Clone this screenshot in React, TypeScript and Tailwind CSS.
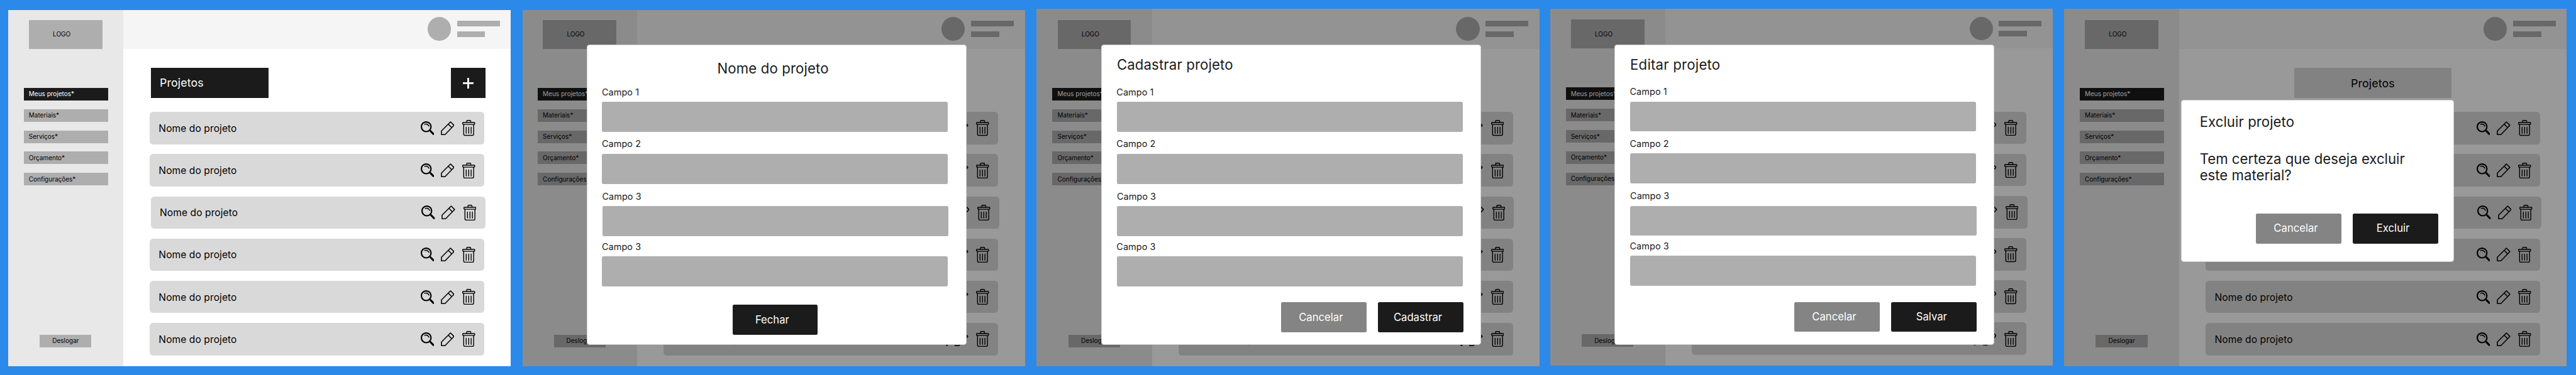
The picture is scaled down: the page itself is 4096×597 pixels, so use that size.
import type { ReactNode } from "react";

const NAV_ITEMS = ["Meus projetos*", "Materiais*", "Serviços*", "Orçamento*", "Configurações*"];
const FIELDS = [
  { label: "Campo 1", className: "" },
  { label: "Campo 2", className: "mt-19" },
  { label: "Campo 3", className: "mt-20 ml-1 -mr-1" },
  { label: "Campo 3", className: "mt-14" },
];

function SearchIcon() {
  return (
    <svg className="h-40 w-39 shrink-0" viewBox="0 0 117 119" fill="none" stroke="black" strokeLinecap="round">
      <circle cx="47" cy="47" r="41.5" strokeWidth="11.5" />
      <path d="M34 26C48 21 63 26 71 42" strokeWidth="8" />
      <path d="M76 76L90 90" strokeWidth="11" />
      <path d="M86 86L108 109" strokeWidth="17" />
    </svg>
  );
}

function PencilIcon() {
  return (
    <svg className="h-40 w-39 shrink-0" viewBox="0 0 117 119" fill="none" stroke="black" strokeWidth="8.5" strokeLinejoin="round">
      <path d="M83 5L113 35L36 114H5V83Z" />
      <path d="M63 24L94 55" />
    </svg>
  );
}

function TrashIcon() {
  return (
    <svg className="h-45.5 w-37 shrink-0" viewBox="0 0 111 136" fill="none" stroke="black" strokeWidth="7.5" strokeLinecap="round" strokeLinejoin="round">
      <path d="M38 20V9Q38 4 43 4H68Q73 4 73 9V20" />
      <rect x="4" y="21" width="103" height="17" rx="4" />
      <path d="M12.500 38V121Q12.500 132 23.500 132H87Q98 132 98 121V38" />
      <path d="M34 62V115M55.500 62V115M76.500 62V115" />
    </svg>
  );
}

function Sidebar({ className }: { className: string }) {
  return (
    <aside className={`flex shrink-0 flex-col bg-[#e8e8e8] text-[10px] ${className}`}>
      <div className="ml-59 flex h-83 w-210 items-center bg-[#aeaeae] pl-68.5">LOGO</div>
      <nav className="mt-112 ml-44 flex w-241 flex-col gap-25">
        {NAV_ITEMS.map((item, i) => (
          <a
            key={item}
            className={`flex h-36 items-center pl-14.5 ${i === 0 ? "bg-[#1b1b1b] text-white" : "bg-[#aeaeae]"}`}
          >
            {item}
          </a>
        ))}
      </nav>
      <button className="mt-428 ml-90 flex h-36 w-148 items-center bg-[#aeaeae] pl-36">Deslogar</button>
    </aside>
  );
}

function Header({ className }: { className: string }) {
  return (
    <header className={`flex shrink-0 items-end justify-end bg-[#f5f5f5] pr-32 pb-23 ${className}`}>
      <div className="size-67.5 rounded-full bg-[#aeaeae]" />
      <div className="mb-11 ml-17 flex w-122.5 flex-col gap-14">
        <div className="h-16 bg-[#aeaeae]" />
        <div className="h-16 w-81 bg-[#aeaeae]" />
      </div>
    </header>
  );
}

function ProjectRow({ shifted, covered }: { shifted: boolean; covered: boolean }) {
  return (
    <li className={`flex h-93 w-958 items-center rounded-[5.5px] bg-[#d9d9d9] pr-26 pl-25.5 ${shifted ? "ml-79" : "ml-76"}`}>
      {!covered && <span className="pt-2 text-[15.55px] tracking-[0.09px]">Nome do projeto</span>}
      <div className="ml-auto flex items-center">
        <SearchIcon />
        <div className="w-19" />
        <PencilIcon />
        <div className="w-23" />
        <TrashIcon />
      </div>
    </li>
  );
}

type ScreenProps = {
  className: string;
  sidebar: string;
  header: string;
  /** Number of leading rows whose name lies fully under the dialog. */
  coveredRows?: number;
  children?: ReactNode;
};

function Screen({ className, sidebar, header, coveredRows = 0, children }: ScreenProps) {
  return (
    <section className={`relative flex shrink-0 bg-white ${className}`}>
      <Sidebar className={sidebar} />
      <main className="flex min-w-0 flex-1 flex-col">
        <Header className={header} />
        {children ? (
          <div className="mt-55 ml-329 flex h-86 w-450.5 items-center justify-center bg-[#d9d9d9] pt-4 text-[17.77px] tracking-[0.14px]">
            Projetos
          </div>
        ) : (
          <div className="mt-55 mr-73 ml-79 flex h-86 justify-between">
            <h1 className="flex w-337 items-center bg-[#1b1b1b] pl-25.5 text-[17.77px] tracking-[0.14px] text-white">
              Projetos
            </h1>
            <button className="flex w-98.5 items-center justify-center bg-[#1b1b1b] pt-2">
              <svg className="size-30.5" viewBox="0 0 30 30" stroke="white" strokeWidth="5">
                <path d="M15 0V30M0 15H30" />
              </svg>
            </button>
          </div>
        )}
        <ul className="mt-40 flex flex-col gap-28">
          {[0, 1, 2, 3, 4, 5].map((i) => (
            <ProjectRow key={i} shifted={i === 2} covered={i < coveredRows} />
          ))}
        </ul>
      </main>
      {children && <div className="absolute inset-0 bg-black/40" />}
      {children}
    </section>
  );
}

function Modal({ className, children }: { className: string; children: ReactNode }) {
  return (
    <div
      className={`absolute flex flex-col rounded-[5px] bg-white text-[#1b1b1b] inset-ring inset-ring-[#d0d0d0] ${className}`}
    >
      {children}
    </div>
  );
}

function Fields({ className }: { className: string }) {
  return (
    <div className={`ml-44 w-991 ${className}`}>
      {FIELDS.map((field, i) => (
        <div key={i} className={field.className}>
          <div className="-ml-0.5 text-[14.44px] leading-32 tracking-[0.06px]">{field.label}</div>
          <div className="mt-12 h-86 rounded-[2.8px] bg-[#aeaeae]" />
        </div>
      ))}
    </div>
  );
}

function Button({ className, children }: { className: string; children: ReactNode }) {
  return (
    <button className={`flex h-86 w-244.5 items-center rounded-[2.5px] text-[16.66px] text-white ${className}`}>
      {children}
    </button>
  );
}

export default function App() {
  return (
    <div className="flex h-[597px] w-[4096px] items-start overflow-hidden bg-[#2b89e9] font-['Inter',sans-serif] text-black [--spacing:0.55524px]">
      <Screen className="mt-28 ml-24 h-1022 w-1439" sidebar="w-329 pt-29" header="h-112" />

      <Screen className="mt-28 ml-33 h-1022 w-1439" sidebar="w-329 pt-29" header="h-112">
        <Modal className="top-100 left-184 h-861 w-1087.5">
          <h2 className="mt-45 ml-374 text-[22.2px] leading-48 tracking-[0.13px]">Nome do projeto</h2>
          <Fields className="mt-27" />
          <Button className="mt-53 ml-417.5 bg-[#1b1b1b] pl-65.5">Fechar</Button>
        </Modal>
      </Screen>

      <Screen className="mt-26 ml-34 h-1024 w-1440" sidebar="w-330 pt-31 pl-1" header="h-114">
        <Modal className="top-102 left-185 h-861 w-1087">
          <h2 className="mt-34.5 ml-44.5 text-[22.2px] leading-48 tracking-[0.13px]">Cadastrar projeto</h2>
          <Fields className="mt-37.5" />
          <div className="mt-46 ml-514.5 flex gap-33.5">
            <Button className="bg-[#848484] pl-51">Cancelar</Button>
            <Button className="bg-[#1b1b1b] pl-44.5">Cadastrar</Button>
          </div>
        </Modal>
      </Screen>

      <Screen className="mt-25 ml-31 h-1023 w-1439" sidebar="w-329 pt-31" header="h-114">
        <Modal className="top-102 left-184 h-861 w-1087">
          <h2 className="mt-34.5 ml-44.5 text-[22.2px] leading-48 tracking-[0.22px]">Editar projeto</h2>
          <Fields className="mt-37.5" />
          <div className="mt-46 ml-514.5 flex gap-33.5">
            <Button className="bg-[#848484] pl-51">Cancelar</Button>
            <Button className="bg-[#1b1b1b] pl-71">Salvar</Button>
          </div>
        </Modal>
      </Screen>

      <Screen
        className="mt-25 ml-32 h-1025 w-1440"
        sidebar="w-330 pt-32 pl-1"
        header="h-115"
        coveredRows={2}
      >
        <Modal className="top-260.5 left-335 h-466 w-781">
          <h2 className="mt-40 ml-53.5 text-[22.2px] leading-48 tracking-[0.05px]">Excluir projeto</h2>
          <p className="mt-58 ml-53.5 text-[22.2px] leading-48.5">
            Tem certeza que deseja excluir
            <br />
            este material?
          </p>
          <div className="mt-84 ml-214.5 flex gap-33.5">
            <Button className="bg-[#848484] pl-51">Cancelar</Button>
            <Button className="bg-[#1b1b1b] pl-67.5">Excluir</Button>
          </div>
        </Modal>
      </Screen>
    </div>
  );
}
